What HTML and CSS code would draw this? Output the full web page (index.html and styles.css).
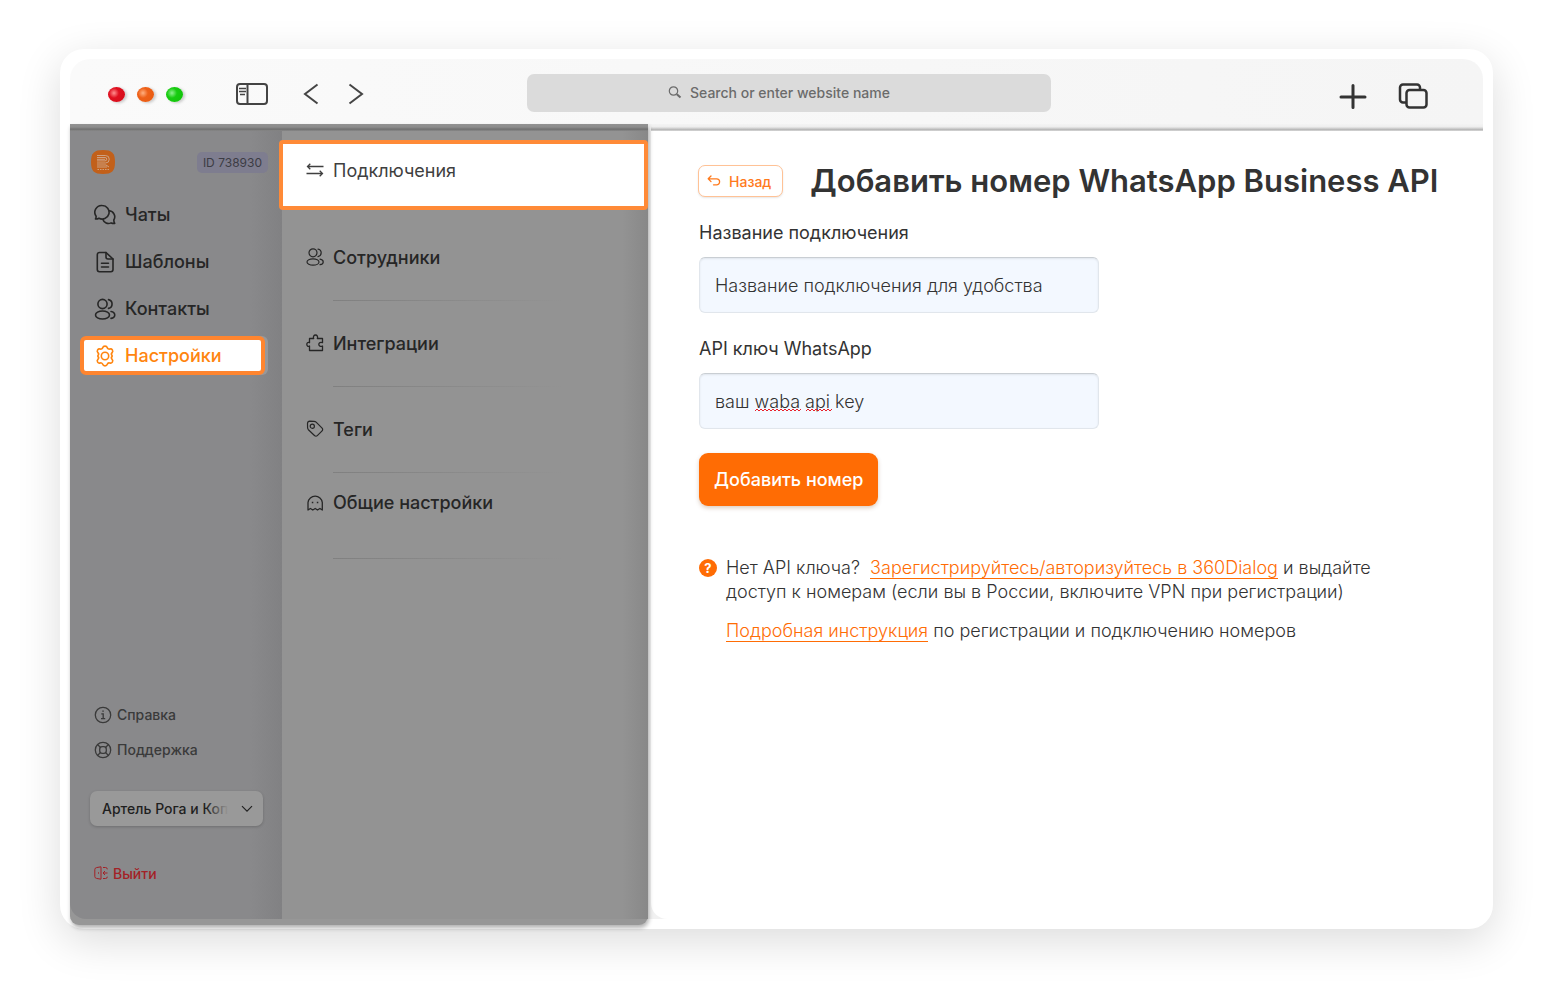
FILE: index.html
```html
<!DOCTYPE html>
<html lang="ru">
<head>
    <meta charset="UTF-8">
    <meta name="viewport" content="width=device-width, initial-scale=1.0">
    <title>Добавить номер WhatsApp Business API</title>
    <link rel="stylesheet" href="styles.css">
</head>
<body>

    <div class="browser">
        <header class="toolbar">
            <div class="lights">
                <span class="light red"></span>
                <span class="light orange"></span>
                <span class="light green"></span>
            </div>
            <button type="button" class="tool panel-btn" aria-label="Боковая панель">
                <svg width="34" height="24" viewBox="0 0 34 24" fill="none" stroke="#444" stroke-width="2">
                    <rect x="2" y="2" width="30" height="20" rx="3"/>
                    <path d="M12.500 2v20"/>
                    <path d="M4 6.500h7M4 9.500h7M5 12.500h5" stroke-width="1.500"/>
                </svg>
            </button>
            <button type="button" class="tool prev-btn" aria-label="Назад">
                <svg width="16" height="22" viewBox="0 0 16 22" fill="none" stroke="#444" stroke-width="2"><path d="M14.500 1.500L2 11l12.500 9.500"/></svg>
            </button>
            <button type="button" class="tool next-btn" aria-label="Вперёд">
                <svg width="16" height="22" viewBox="0 0 16 22" fill="none" stroke="#444" stroke-width="2"><path d="M1.500 1.500L14 11 1.500 20.500"/></svg>
            </button>
            <div class="address">
                <svg width="14" height="14" viewBox="0 0 14 14" fill="none" stroke="#6b6b6b" stroke-width="1.200">
                    <circle cx="5.500" cy="5" r="4.200"/>
                    <path d="M8.800 8.200l3.700 3.300" stroke-width="2"/>
                </svg>
                <input type="text" aria-label="Адрес" placeholder="Search or enter website name">
            </div>
            <div class="toolbar-right">
                <button type="button" class="tool" aria-label="Новая вкладка">
                    <svg width="28" height="26" viewBox="0 0 28 26" fill="none" stroke="#333" stroke-width="3" stroke-linecap="round"><path d="M14 2.500v22M2 14h24"/></svg>
                </button>
                <button type="button" class="tool" aria-label="Все вкладки">
                    <svg width="30" height="26" viewBox="0 0 30 26" fill="none" stroke="#333" stroke-width="2.500">
                        <path d="M8.500 19.500H5a3 3 0 0 1-3-3V4.500a3 3 0 0 1 3-3h14a3 3 0 0 1 3 3V7"/>
                        <rect x="8.500" y="7" width="20" height="17.500" rx="3"/>
                    </svg>
                </button>
            </div>
        </header>

        <div class="app">
            <div class="menus">
                <aside class="sidebar">
                    <div class="account">
                        <svg width="24" height="24" viewBox="0 0 24 24" fill="none">
                            <path d="M12 0c9 0 12 3 12 12s-3 12-12 12S0 21 0 12 3 0 12 0z" fill="#c2601a"/>
                            <path d="M6 5.500h8.500a3.500 3.500 0 0 1 0 7.500H6M6 7.500h8a1.600 1.600 0 0 1 0 3.400H6M6 9.300h8M6 15h9l3 2M6 17h10" stroke="#d0b39d" stroke-width="0.800"/>
                            <path d="M6.500 19.500h12" stroke="#d0a17d" stroke-width="1" stroke-dasharray="1.500 1"/>
                        </svg>
                        <span class="badge">ID 738930</span>
                    </div>

                    <nav class="nav">
                        <a href="#" class="nav-item">
                            <svg width="22" height="22" viewBox="0 0 22 22" fill="none" stroke="currentColor" stroke-width="1.600" stroke-linejoin="round">
                                <path d="M8.300 1.500a6.800 6.800 0 1 1-3.400 12.700c-1 .6-2.200.9-3.400.7.500-.9.700-1.700.6-2.700A6.800 6.800 0 0 1 8.300 1.500z"/>
                                <path d="M15 6.800a6 6 0 0 1 4.800 9.200c0 1.300.3 2.400.9 3.400-1.300.1-2.500-.1-3.600-.5a6 6 0 0 1-8.300-3.700"/>
                            </svg>
                            Чаты
                        </a>
                        <a href="#" class="nav-item">
                            <svg width="22" height="22" viewBox="0 0 22 22" fill="none" stroke="currentColor" stroke-width="1.600" stroke-linejoin="round">
                                <path d="M5.500 1.500H12l7 6.500v10.500a2.200 2.200 0 0 1-2.200 2.200H5.500a2.200 2.200 0 0 1-2.200-2.200V3.700a2.200 2.200 0 0 1 2.200-2.200z"/>
                                <path d="M12 1.500V6a2 2 0 0 0 2 2h5M7.500 12.200h7M7.500 16h7" stroke-linecap="round"/>
                            </svg>
                            Шаблоны
                        </a>
                        <a href="#" class="nav-item">
                            <svg width="22" height="22" viewBox="0 0 22 22" fill="none" stroke="currentColor" stroke-width="1.600" stroke-linecap="round">
                                <circle cx="8.500" cy="6" r="4.600"/>
                                <ellipse cx="8.500" cy="17" rx="7" ry="4"/>
                                <path d="M14.500 1.600a4.500 4.500 0 0 1 0 8.800M17 13.500c5 .8 5 6 0 6.900"/>
                            </svg>
                            Контакты
                        </a>
                        <a href="#" class="nav-item active">
                            <svg width="22" height="22" viewBox="0 0 22 22" fill="none" stroke="currentColor" stroke-width="1.600" stroke-linejoin="round">
                                <path d="M8.700 2.700C9.300.6 12.700.6 13.300 2.700c.3 1 1.500 1.600 2.500 1.300 2.200-.7 3.900 2 2.300 3.600-.8.800-.8 2.200 0 3 0 0 0 .8 0 .8-.8.800-.8 2.200 0 3 1.600 1.600-.1 4.300-2.300 3.600-1-.3-2.200.3-2.500 1.300-.6 2.100-4 2.100-4.600 0-.3-1-1.500-1.600-2.500-1.300-2.200.7-3.900-2-2.300-3.600.8-.8.8-2.200 0-3v-.8c.8-.8.8-2.200 0-3C2.300 6 4 3.300 6.200 4c1 .3 2.200-.3 2.500-1.300z"/>
                                <circle cx="11" cy="11" r="3.700"/>
                            </svg>
                            Настройки
                        </a>
                    </nav>

                    <div class="sidebar-bottom">
                        <a href="#" class="small-link">
                            <svg width="18" height="18" viewBox="0 0 18 18" fill="none" stroke="currentColor" stroke-width="1.300">
                                <circle cx="9" cy="9" r="7.700"/>
                                <path d="M7.300 7.800h1.900v4.700M7 12.700h4.200M8.300 5.200h1.500"/>
                            </svg>
                            Справка
                        </a>
                        <a href="#" class="small-link">
                            <svg width="18" height="18" viewBox="0 0 18 18" fill="none" stroke="currentColor" stroke-width="1.300">
                                <circle cx="9" cy="9" r="7.700"/>
                                <rect x="5.700" y="5.700" width="6.600" height="6.600" rx="2.500"/>
                                <path d="M3.500 3.500l3 3M14.500 3.500l-3 3M3.500 14.500l3-3M14.500 14.500l-3-3"/>
                            </svg>
                            Поддержка
                        </a>
                        <div class="company">
                            <select aria-label="Компания">
                                <option>Артель Рога и Копыта</option>
                            </select>
                            <svg width="12" height="8" viewBox="0 0 12 8" fill="none" stroke="#222" stroke-width="1.200"><path d="M1 1.200l5 5 5-5"/></svg>
                        </div>
                        <a href="#" class="logout">
                            <svg width="14" height="14" viewBox="0 0 14 14" fill="none" stroke="currentColor" stroke-width="1">
                                <path d="M7 .8L2.500 1.600Q.8 2 .8 3.500v7Q.8 12 2.500 12.400L7 13.200zM9 1.500h2.500a1.800 1.800 0 0 1 1.800 1.800M9 12.500h2.500a1.800 1.800 0 0 0 1.800-1.800M13.500 7H9.500M11 5L9 7l2 2"/>
                                <path d="M4.500 6.300v1.400"/>
                            </svg>
                            Выйти
                        </a>
                    </div>
                </aside>

                <nav class="submenu">
                    <a href="#" class="sub-item selected">
                        <svg width="18" height="18" viewBox="0 0 18 18" fill="none" stroke="currentColor" stroke-width="1.300"><path d="M17.500 5.500H1.500M4.300 2.700L1.500 5.500l2.800 2.800M.5 12.500h16M13.700 9.700l2.800 2.800-2.800 2.800"/></svg>
                        Подключения
                    </a>
                    <a href="#" class="sub-item">
                        <svg width="18" height="18" viewBox="0 0 18 18" fill="none" stroke="currentColor" stroke-width="1.200" stroke-linecap="round">
                            <circle cx="7" cy="4.800" r="4"/>
                            <ellipse cx="7" cy="14" rx="6" ry="3.200"/>
                            <path d="M12 1.100a3.800 3.800 0 0 1 0 7.500M14 11.200c4.300.7 4.300 4.800 0 5.500"/>
                        </svg>
                        Сотрудники
                    </a>
                    <a href="#" class="sub-item">
                        <svg width="18" height="18" viewBox="0 0 18 18" fill="none" stroke="currentColor" stroke-width="1.300" stroke-linejoin="round">
                            <path d="M3.500 4.500h4.200c-.9-1.800.2-3.500 1.800-3.500s2.700 1.700 1.800 3.500h5.200v4.200c-2-.9-3.700 0-3.700 1.600s1.700 2.600 3.700 1.700v4.500h-13V12C1.700 12.900.8 11.500.8 10.300S1.700 7.800 3.500 8.700z"/>
                        </svg>
                        Интеграции
                    </a>
                    <a href="#" class="sub-item">
                        <svg width="18" height="18" viewBox="0 0 18 18" fill="none" stroke="currentColor" stroke-width="1.200" stroke-linejoin="round">
                            <path d="M1.500 3.500a2.400 2.400 0 0 1 2.300-2.300l4.300.1a3 3 0 0 1 2 .9l6 6a1.800 1.800 0 0 1 0 2.600l-4.800 4.900a1.800 1.800 0 0 1-2.600 0l-6.300-6a3 3 0 0 1-.8-1.900z"/>
                            <circle cx="6.300" cy="6.200" r="2.100"/>
                        </svg>
                        Теги
                    </a>
                    <a href="#" class="sub-item last">
                        <svg width="18" height="18" viewBox="0 0 18 18" fill="none" stroke="currentColor" stroke-width="1.300" stroke-linejoin="round">
                            <path d="M2 16V8.500a7.200 7.200 0 0 1 14.300 0V16l-2.400-1.500L11.500 16l-2.300-1.500L6.800 16l-2.400-1.500z"/>
                            <path d="M5.800 8.500h1.500M10.800 8.500h1.500" stroke-width="1.500"/>
                        </svg>
                        Общие настройки
                    </a>
                </nav>
            </div>

            <main class="content">
                <div class="title-row">
                    <button type="button" class="back">
                        <svg width="14" height="12" viewBox="0 0 14 12" fill="none" stroke="currentColor" stroke-width="1.300" stroke-linecap="round" stroke-linejoin="round"><path d="M4 1L1.200 3.800 4 6.600M1.200 3.800h8.400a3 3 0 0 1 0 6H6.500"/></svg>
                        Назад
                    </button>
                    <h1>Добавить номер WhatsApp Business API</h1>
                </div>

                <form>
                    <label for="name">Название подключения</label>
                    <div class="field">
                        <input type="text" id="name" value="Название подключения для удобства">
                    </div>
                    <label for="key">API ключ WhatsApp</label>
                    <div class="field">
                        <input type="text" id="key" value="ваш waba api key">
                        <svg class="squiggle" width="78" height="4" viewBox="0 0 78 4" fill="none" stroke="#e8202a" stroke-width="1">
                            <path d="M0 3l2-2 2 2 2-2 2 2 2-2 2 2 2-2 2 2 2-2 2 2 2-2 2 2 2-2 2 2 2-2 2 2 2-2 2 2 2-2 2 2 2-2 2 2 2-2M51 3l2-2 2 2 2-2 2 2 2-2 2 2 2-2 2 2 2-2 2 2 2-2 2 2 2-2"/>
                        </svg>
                    </div>
                    <button type="button" class="submit">Добавить номер</button>
                </form>

                <div class="help">
                    <span class="help-icon">?</span>
                    <div class="help-text">
                        <p>Нет API ключа?&nbsp; <a href="#">Зарегистрируйтесь/авторизуйтесь в 360Dialog</a> и выдайте доступ к номерам (если вы в России, включите VPN при регистрации)</p>
                        <p><a href="#">Подробная инструкция</a> по регистрации и подключению номеров</p>
                    </div>
                </div>
            </main>
        </div>
    </div>

</body>
</html>
```

FILE: styles.css
```css
* {
    box-sizing: border-box;
}

body {
    margin: 0;
    padding: 49px 60px 71px;
    background-color: #fff;
    color: #333;
    font-family: Inter, "Liberation Sans", sans-serif;
    font-size: 18px;
}

a {
    color: inherit;
    text-decoration: none;
}

button, input, select {
    font-family: inherit;
}

svg {
    display: block;
    flex-shrink: 0;
}

.browser {
    display: flex;
    flex-direction: column;
    min-height: calc(100vh - 120px);
    padding: 10px 10px 4px;
    background-color: #fff;
    border-radius: 24px;
    box-shadow: 0 12px 44px rgba(0,0,0,0.14);
}

/* toolbar */
.toolbar {
    display: flex;
    align-items: center;
    height: 65px;
    padding: 5px 55px 0 38px;
    background: linear-gradient(to right, #fafafa, #f5f5f5);
    border-radius: 20px 20px 0 0;
}

.lights {
    display: flex;
    gap: 12px;
}

.light {
    width: 17px;
    height: 15px;
    border-radius: 50%;
    box-shadow: 2px 1px 3px rgba(0,0,0,0.2);
}

.red {
    background: radial-gradient(circle at 35% 40%, #ff8f8f, #e01020 35%, #d00d18);
}

.orange {
    background: radial-gradient(circle at 35% 40%, #ffb080, #ee6018 35%, #e65a10);
}

.green {
    background: radial-gradient(circle at 35% 40%, #90f090, #18cc10 35%, #10c008);
}

.tool {
    padding: 0;
    border: none;
    background: none;
    cursor: pointer;
}

.panel-btn {
    margin-left: 52px;
}

.prev-btn {
    margin-left: 34px;
}

.next-btn {
    margin-left: 29px;
}

.address {
    display: flex;
    align-items: center;
    justify-content: center;
    gap: 8px;
    flex: 0 1 524px;
    height: 38px;
    margin: 0 auto 3px 163px;
    background-color: #dbdbdb;
    border-radius: 7px;
}

.address input {
    width: 220px;
    padding: 0;
    border: none;
    background: none;
    font-size: 14px;
    font-weight: 500;
}

.address input::placeholder {
    color: #6b6b6b;
    opacity: 1;
}

.toolbar-right {
    display: flex;
    gap: 31px;
    padding-top: 4px;
}

.app {
    display: flex;
    flex: 1;
    background: linear-gradient(#f1f1f1, #f1f1f1) no-repeat;
    background-size: 100% calc(100% - 6px);
}

/* dimmed menus */
.menus {
    display: flex;
    width: 578px;
    flex-shrink: 0;
    position: relative;
    background-color: #979797;
    border-radius: 0 0 9px 9px;
    box-shadow: 1px 3px 4px rgba(0,0,0,0.3);
    padding-bottom: 6px;
}

.menus::before {
    content: "";
    position: absolute;
    left: 0;
    right: 0;
    top: 0;
    height: 7px;
    background: linear-gradient(#929292, #8c8c8c 45%, #707070 75%, #8a8a8a);
}

.sidebar {
    display: flex;
    flex-direction: column;
    width: 212px;
    padding-top: 26px;
    background: linear-gradient(to right, #89898b 85%, #818183);
    border-bottom-left-radius: 16px;
}

.account {
    display: flex;
    align-items: center;
    justify-content: space-between;
    padding: 0 14px 0 21px;
}

.badge {
    padding: 0 6px;
    background-color: #7e7d8f;
    border-radius: 5px;
    color: #3c3c44;
    font-size: 12px;
    line-height: 21px;
}

.nav {
    display: flex;
    flex-direction: column;
    gap: 8px;
    margin: 21px 17px 0 10px;
}

.nav-item {
    display: flex;
    align-items: center;
    gap: 9px;
    height: 39px;
    padding-left: 10px;
    border: 4px solid transparent;
    border-radius: 6px;
    color: #262626;
    font-weight: 500;
}

.nav-item.active {
    background-color: #fff;
    border-color: #ff852f;
    color: #ff850f;
    box-shadow: 3px 0 0 #98989a;
}

.sidebar-bottom {
    margin-top: auto;
    padding: 0 19px 35px 20px;
}

.small-link {
    display: flex;
    align-items: center;
    gap: 5px;
    height: 35px;
    padding-left: 4px;
    color: #3a3a3a;
    font-size: 14px;
    font-weight: 500;
}

.company {
    position: relative;
    margin: 24px 0 36px;
}

.company select {
    display: block;
    width: 100%;
    height: 35px;
    padding: 0 30px 0 12px;
    appearance: none;
    border: none;
    border-radius: 7px;
    background-color: #999;
    box-shadow: 0 1px 3px rgba(0,0,0,0.2);
    color: #1f1f1f;
    font-size: 14px;
    font-weight: 500;
}

.company::after {
    content: "";
    position: absolute;
    top: 4px;
    right: 29px;
    width: 28px;
    height: 27px;
    background: linear-gradient(to right, rgba(153,153,153,0), #999 80%);
}

.company svg {
    position: absolute;
    top: 14px;
    right: 10px;
}

.logout {
    display: flex;
    align-items: center;
    gap: 5px;
    height: 22px;
    padding-left: 4px;
    color: #a32126;
    font-size: 14px;
    font-weight: 500;
}

.submenu {
    flex: 1;
    padding-top: 16px;
    background: linear-gradient(to right, #939393 93%, #888);
}

.sub-item {
    display: flex;
    align-items: center;
    gap: 9px;
    height: 86px;
    padding: 0 0 2px 24px;
    position: relative;
    color: #262626;
    font-weight: 500;
}

.sub-item::after {
    content: "";
    position: absolute;
    left: 51px;
    bottom: 0;
    width: 230px;
    height: 1px;
    background: linear-gradient(to right, #808080, #939393);
}

.sub-item.selected {
    align-items: flex-start;
    height: 70px;
    margin: 0 0 5px -3px;
    padding: 17px 0 0 23px;
    background-color: #fff;
    border: 4px solid #ff8a37;
    border-radius: 4px;
    color: #3f3f3f;
    line-height: 20px;
    font-weight: 400;
}

.sub-item.selected::after {
    display: none;
}

.sub-item.last {
    padding-bottom: 27px;
}

/* connection form */
.content {
    flex: 1;
    min-width: 0;
    margin: 0 0 6px 3px;
    padding: 41px 30px 40px 47px;
    background: linear-gradient(#f4f4f4, #eee 40%, #b8b8b8 80%, #d8d8d8) no-repeat #fff;
    background-size: 100% 7px;
    border-bottom-left-radius: 16px;
}

.title-row {
    display: flex;
    align-items: center;
    gap: 27px;
}

.back {
    display: flex;
    align-items: center;
    gap: 8px;
    height: 32px;
    padding: 0 11px 0 8px;
    background-color: #fff;
    border: 1px solid #ffc296;
    border-radius: 7px;
    box-shadow: 0 1px 2px rgba(0,0,0,0.1);
    color: #ff7a1c;
    font-size: 14px;
    font-weight: 500;
    white-space: nowrap;
    cursor: pointer;
}

h1 {
    margin: 0;
    color: #333;
    font-size: 31px;
    line-height: 32px;
    font-weight: 600;
}

form {
    margin: 23px 0 0 1px;
}

label {
    display: block;
    margin-bottom: 11px;
    line-height: 26px;
}

.field {
    position: relative;
    max-width: 400px;
    margin-bottom: 23px;
}

.field input {
    display: block;
    width: 100%;
    height: 56px;
    padding: 0 15px;
    border: 1px solid #e1e6ec;
    border-top-color: #c9ced3;
    border-radius: 6px;
    background-color: #f3f8ff;
    box-shadow: inset 0 1px 2px rgba(0,0,0,0.08);
    color: #333;
    font-size: 18px;
    font-weight: 300;
}

.squiggle {
    position: absolute;
    left: 56px;
    top: 35px;
}

.submit {
    height: 53px;
    margin-top: 1px;
    padding: 0 15px;
    background-color: #ff6c04;
    color: #fff;
    font-size: 18px;
    font-weight: 500;
    border: none;
    border-radius: 9px;
    box-shadow: 0 2px 4px rgba(120,60,0,0.25);
    cursor: pointer;
}

.help {
    display: flex;
    gap: 9px;
    max-width: 680px;
    margin: 50px 0 0 1px;
}

.help-icon {
    width: 18px;
    height: 18px;
    margin-top: 3px;
    flex-shrink: 0;
    border-radius: 50%;
    background-color: #ff6c04;
    color: #fff;
    font-size: 13px;
    font-weight: 700;
    line-height: 18px;
    text-align: center;
}

.help-text p {
    margin: 0 0 15px;
    line-height: 24px;
    font-weight: 300;
}

.help-text a {
    color: #ff6c04;
    border-bottom: 1px solid #ff6c04;
}
```
